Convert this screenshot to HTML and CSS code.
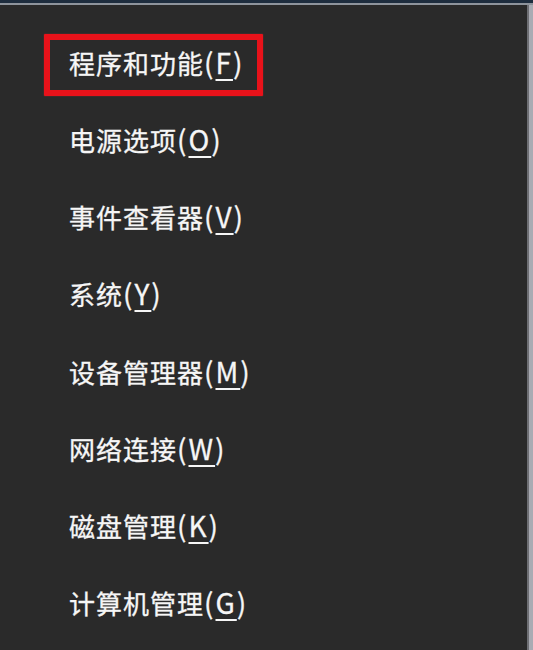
FILE: index.html
```html
<!DOCTYPE html>
<html lang="zh-CN">
<head>
<meta charset="utf-8">
<title>快速链接菜单</title>
<link rel="stylesheet" href="styles.css">
</head>
<body>
<div class="frame">
  <div class="topbar"></div>
  <div class="topline"></div>
  <div class="main">
    <ul class="menu">
      <li class="item selected"><span class="label">程序和功能<span class="key">(<u>F</u>)</span></span><span class="mark"></span></li>
      <li class="item"><span class="label">电源选项<span class="key">(<u>O</u>)</span></span></li>
      <li class="item"><span class="label">事件查看器<span class="key">(<u>V</u>)</span></span></li>
      <li class="item"><span class="label">系统<span class="key">(<u>Y</u>)</span></span></li>
      <li class="item"><span class="label">设备管理器<span class="key">(<u>M</u>)</span></span></li>
      <li class="item"><span class="label">网络连接<span class="key">(<u>W</u>)</span></span></li>
      <li class="item"><span class="label">磁盘管理<span class="key">(<u>K</u>)</span></span></li>
      <li class="item"><span class="label">计算机管理<span class="key">(<u>G</u>)</span></span></li>
    </ul>
    <div class="edge-dark"></div>
    <div class="edge-light"></div>
  </div>
</div>
</body>
</html>
```
FILE: styles.css
```css
html, body {
  margin: 0;
  padding: 0;
  background: #2b2b2b;
}
.frame {
  width: 533px;
  height: 650px;
  display: flex;
  flex-direction: column;
  overflow: hidden;
}
.topbar {
  height: 3px;
  background: #1e2d3e;
}
.topline {
  height: 2px;
  background: #8e949c;
}
.main {
  flex: 1;
  display: flex;
  background: #2a2a2a;
}
.menu {
  flex: 1;
  list-style: none;
  margin: 0;
  padding: 19px 0 0 69px;
}
.item {
  position: relative;
  height: 77.15px;
  line-height: 77.15px;
  font-family: "Noto Sans CJK SC", "Microsoft YaHei", sans-serif;
  font-size: 26px;
  letter-spacing: 1px;
  color: #f6f6f6;
  white-space: nowrap;
  -webkit-text-stroke: 0.3px #f6f6f6;
}
.key {
  font-size: 28px;
  letter-spacing: 2px;
}
.item u {
  text-decoration: underline;
  text-decoration-thickness: 2px;
  text-underline-offset: 5px;
}
.mark {
  position: absolute;
  left: -25px;
  top: 10px;
  width: 207px;
  height: 50px;
  border: 6px solid #e8121a;
  border-radius: 1px;
  box-shadow: 0 0 1px #ff3a3a;
}
.edge-dark {
  width: 2px;
  background: #6e6f74;
}
.edge-light {
  width: 4px;
  background: #a9abb3;
}
```
